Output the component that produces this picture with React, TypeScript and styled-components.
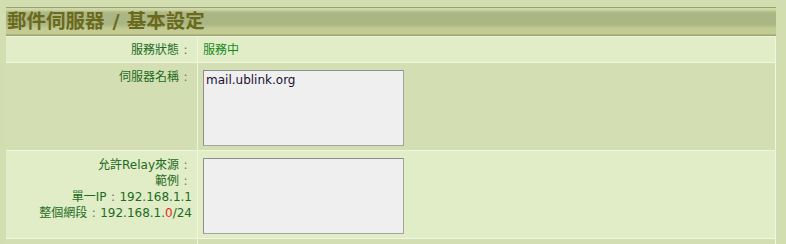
import React from "react";
import styled, { createGlobalStyle } from "styled-components";

const Global = createGlobalStyle`
  html, body { margin: 0; padding: 0; background: #d2ddb0; overflow: hidden; }
  body { font-family: "DejaVu Sans", "Noto Sans CJK TC", sans-serif; }
`;

const Wrapper = styled.div`
  padding: 7px 0 0 6px;
  width: 770px;
`;

const Header = styled.div`
  width: 769px;
  height: 28px;
  box-sizing: content-box;
  border-top: 1px solid #96a273;
  background: linear-gradient(
    to bottom,
    #d2daab 0px,
    #cdd5a4 2px,
    #bcc592 3px,
    #aab683 5px,
    #a9b583 16px,
    #b4be8a 18px,
    #c3cb94 21px,
    #c4cc94 26px,
    #9ca571 27px,
    #9ca571 28px
  );
  display: flex;
  align-items: center;
  padding-left: 1px;
`;

const Title = styled.h1`
  margin: 0;
  font-family: "Noto Sans CJK TC", "DejaVu Sans", sans-serif;
  font-size: 19.5px;
  font-weight: 700;
  color: #6a691c;
  line-height: 1;
  transform: translateY(-1px);
`;

const Slash = styled.span`
  margin: 0 7px 0 8px;
  font-family: "DejaVu Sans", sans-serif;
`;

const Grid = styled.div`
  display: grid;
  grid-template-columns: 191px 1fr;
  column-gap: 1px;
  row-gap: 1px;
  background: #f0f5e0;
  padding: 1px 1px 0 0;
  width: 770px;
  box-sizing: border-box;
`;

const Cell = styled.div<{ $dark?: boolean; $label?: boolean; $pad?: string }>`
  background: ${(p) => (p.$dark ? "#d3dfb3" : "#e0edc7")};
  padding: ${(p) => p.$pad ?? "6px 5px 4px 5px"};
  text-align: ${(p) => (p.$label ? "right" : "left")};
  font-size: 12px;
  line-height: 16px;
  color: #217021;
`;

const Label = styled.div`
  color: #1f6b1f;
`;

const Colon = styled.span`
  display: inline-block;
  width: 13px;
  text-align: center;
  color: #5e7a5e;
`;

const Status = styled.span`
  color: #1a8a1a;
`;

const Red = styled.span`
  color: #e52a1a;
`;

const Area = styled.textarea`
  display: block;
  box-sizing: border-box;
  width: 201px;
  height: 76px;
  margin: 1px 0 0 0;
  padding: 2px 2px;
  background: #efefef;
  border: 1px solid #a4a4a4;
  border-top-color: #8e8e8e;
  border-left-color: #8e8e8e;
  font-family: "DejaVu Sans", "Noto Sans CJK TC", sans-serif;
  font-size: 12px;
  line-height: 15px;
  color: #1c0f35;
  resize: none;
  outline: none;
`;

export default function App() {
  return (
    <>
      <Global />
      <Wrapper>
        <Header>
          <Title>
            郵件伺服器<Slash>/</Slash>基本設定
          </Title>
        </Header>
        <Grid>
          <Cell $label $pad="5px 5px 4px 5px">
            <Label>
              服務狀態<Colon>:</Colon>
            </Label>
          </Cell>
          <Cell $pad="5px 5px 4px 5px">
            <Status>服務中</Status>
          </Cell>

          <Cell $dark $label>
            <Label>
              伺服器名稱<Colon>:</Colon>
            </Label>
          </Cell>
          <Cell $dark>
            <Area defaultValue="mail.ublink.org" />
          </Cell>

          <Cell $label>
            <Label>
              允許Relay來源<Colon>:</Colon>
            </Label>
            <Label>
              範例<Colon>:</Colon>
            </Label>
            <Label>
              單一IP<Colon>:</Colon>192.168.1.1
            </Label>
            <Label>
              整個網段<Colon>:</Colon>192.168.1.<Red>0</Red>/24
            </Label>
          </Cell>
          <Cell>
            <Area defaultValue="" />
          </Cell>

          <Cell $dark $label $pad="0" style={{ height: 20 }} />
          <Cell $dark $pad="0" />
        </Grid>
      </Wrapper>
    </>
  );
}
